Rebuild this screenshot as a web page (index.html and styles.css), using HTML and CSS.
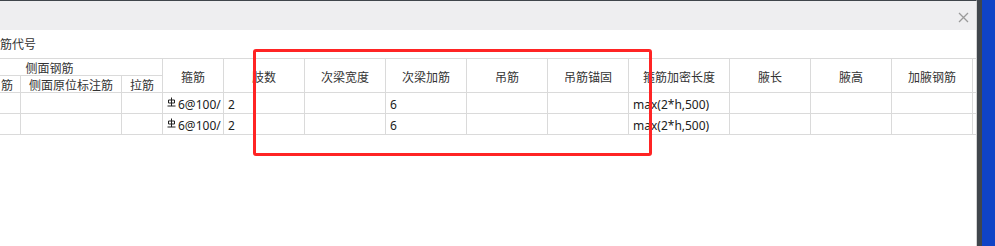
FILE: index.html
```html
<!DOCTYPE html>
<html lang="zh">
<head>
<meta charset="utf-8">
<title>钢筋表</title>
<link rel="stylesheet" href="styles.css">
</head>
<body>
<div class="screen">
  <div class="dialog">
    <div class="titlebar">
      <svg class="close" width="11" height="11" viewBox="0 0 11 11"><path d="M1 1 L10 10 M10 1 L1 10" stroke="#9a9a9a" stroke-width="1.3" fill="none"/></svg>
    </div>
    <div class="content">
      <div class="label">筋代号</div>
      <div class="tablewrap">
        <div class="grid">
          <div class="h group">侧面钢筋</div>
          <div class="h span2 c4">箍筋</div>
          <div class="h span2 c5">肢数</div>
          <div class="h span2 c6">次梁宽度</div>
          <div class="h span2 c7">次梁加筋</div>
          <div class="h span2 c8">吊筋</div>
          <div class="h span2 c9">吊筋锚固</div>
          <div class="h span2 c10">箍筋加密长度</div>
          <div class="h span2 c11">腋长</div>
          <div class="h span2 c12">腋高</div>
          <div class="h span2 c13">加腋钢筋</div>
          <div class="h span2 c14"></div>
          <div class="h sub right">筋</div>
          <div class="h sub">侧面原位标注筋</div>
          <div class="h sub">拉筋</div>

          <div class="d"></div><div class="d"></div><div class="d"></div>
          <div class="d"><span class="steel"><svg width="9" height="10" viewBox="0 0 9 10"><path d="M4.5 0.5 V9 M1.5 3 H7.5 V6 H1.5 Z M0.5 9 H8.5" stroke="#222" stroke-width="1" fill="none"/></svg></span>6@100/</div>
          <div class="d">2</div><div class="d"></div><div class="d">6</div><div class="d"></div><div class="d"></div>
          <div class="d">max(2*h,500)</div><div class="d"></div><div class="d"></div><div class="d"></div><div class="d"></div>

          <div class="d"></div><div class="d"></div><div class="d"></div>
          <div class="d"><span class="steel"><svg width="9" height="10" viewBox="0 0 9 10"><path d="M4.5 0.5 V9 M1.5 3 H7.5 V6 H1.5 Z M0.5 9 H8.5" stroke="#222" stroke-width="1" fill="none"/></svg></span>6@100/</div>
          <div class="d">2</div><div class="d"></div><div class="d">6</div><div class="d"></div><div class="d"></div>
          <div class="d">max(2*h,500)</div><div class="d"></div><div class="d"></div><div class="d"></div><div class="d"></div>
        </div>
      </div>
    </div>
  </div>
  <div class="frame"></div>
  <div class="blue"></div>
</div>
<div class="highlight"></div>
</body>
</html>
```

FILE: styles.css
```css
html, body {
  margin: 0;
  padding: 0;
  background: #ffffff;
}
body {
  font-family: "Noto Sans", "Noto Sans CJK SC", sans-serif;
  font-size: 12px;
  color: #333;
  width: 995px;
  height: 246px;
  overflow: hidden;
  position: relative;
}
.screen {
  display: flex;
  height: 246px;
}
.dialog {
  width: 977px;
  box-sizing: border-box;
  border-top: 1px solid #3f454b;
  border-right: 1px solid #d4d4d4;
  background: #fff;
  overflow: hidden;
  flex: none;
}
.frame {
  width: 5px;
  background: #40464c;
  flex: none;
}
.blue {
  flex: 1;
  background: #1043c6;
}
.titlebar {
  height: 29px;
  background: #eeeef0;
  display: flex;
  justify-content: flex-end;
  align-items: center;
  padding-right: 7px;
}
.close {
  display: block;
  margin-top: 3px;
}
.content {
  padding-top: 6px;
}
.label {
  height: 22px;
  line-height: 18px;
  color: #333;
  white-space: nowrap;
}
.tablewrap {
  overflow: hidden;
}
.grid {
  margin-left: -63px;
  display: grid;
  grid-template-columns: 84px 101px 41px 61px 81px 81px 81px 81px 81px 101px 81px 81px 81px 81px;
  grid-template-rows: 17px 17px 21px 21px;
  border-top: 1px solid #dadada;
  width: max-content;
}
.h, .d {
  box-sizing: border-box;
  border-right: 1px solid #dadada;
  border-bottom: 1px solid #dadada;
  white-space: nowrap;
  overflow: hidden;
}
.h {
  color: #333;
  text-align: center;
  display: flex;
  align-items: center;
  justify-content: center;
  padding-top: 2px;
}
.group {
  grid-column: 1 / span 3;
  grid-row: 1;
}
.span2 { grid-row: 1 / span 2; }
.c4 { grid-column: 4; }
.c5 { grid-column: 5; }
.c6 { grid-column: 6; }
.c7 { grid-column: 7; }
.c8 { grid-column: 8; }
.c9 { grid-column: 9; }
.c10 { grid-column: 10; }
.c11 { grid-column: 11; }
.c12 { grid-column: 12; }
.c13 { grid-column: 13; }
.c14 { grid-column: 14; }
.sub { grid-row: 2; }
.right {
  justify-content: flex-end;
  padding-right: 7px;
}
.d {
  color: #222;
  padding-left: 4px;
  display: flex;
  align-items: center;
  padding-top: 2px;
}
.steel {
  display: inline-flex;
  margin-right: 2px;
  margin-top: -5px;
}
.highlight {
  position: absolute;
  left: 253px;
  top: 49px;
  width: 399px;
  height: 107px;
  box-sizing: border-box;
  border: 3px solid #ff2424;
  border-radius: 3px;
}
```
